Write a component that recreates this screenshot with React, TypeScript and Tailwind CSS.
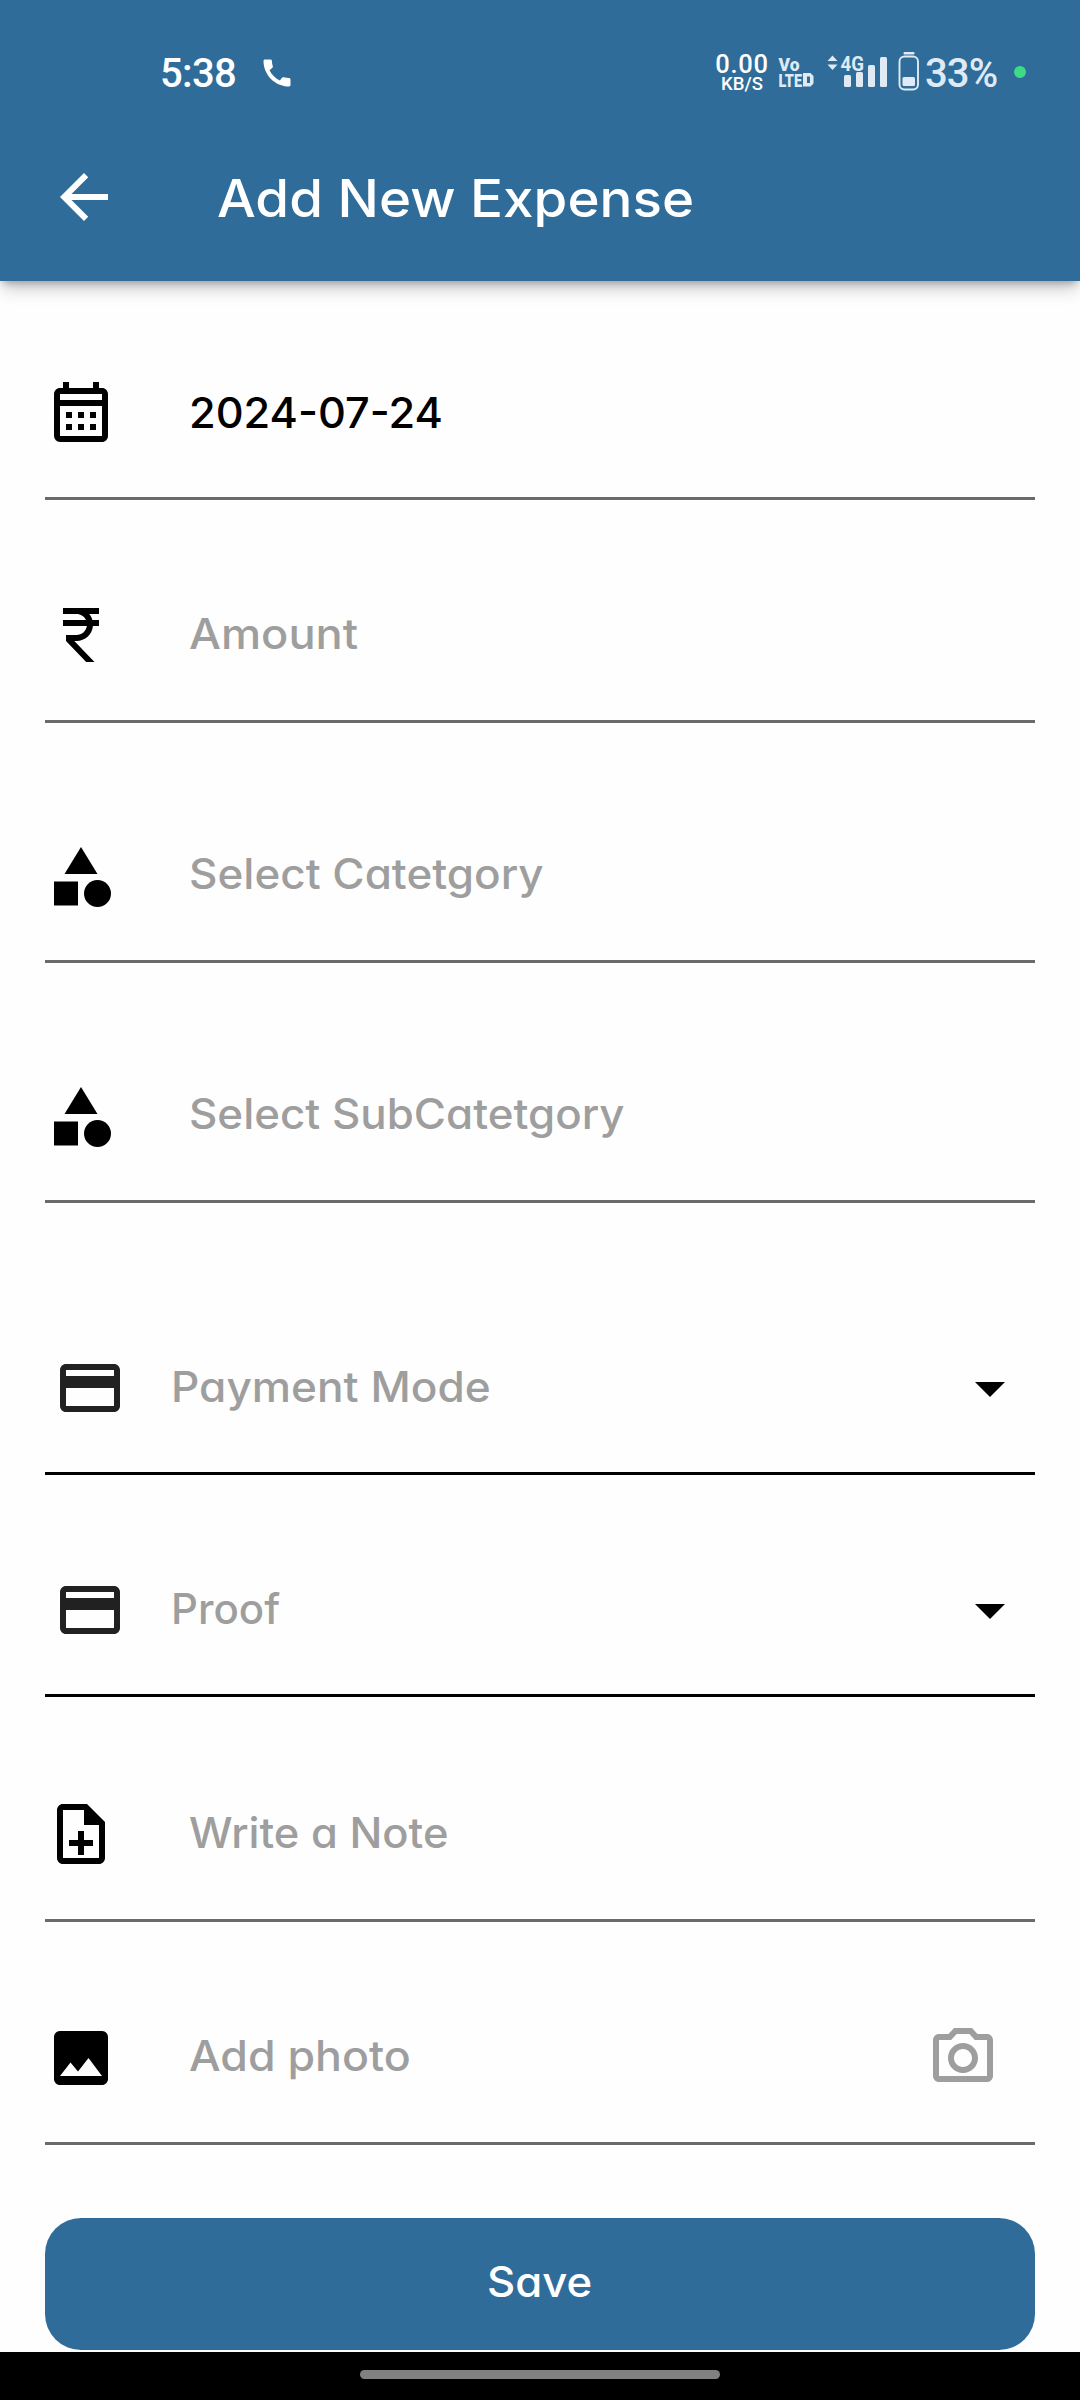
import type { ReactNode } from "react";
import {
  MdArrowBack,
  MdArrowDropDown,
  MdCall,
  MdCategory,
  MdCreditCard,
  MdCurrencyRupee,
  MdImage,
  MdOutlineCalendarMonth,
  MdOutlineCameraAlt,
  MdOutlineNoteAdd,
} from "react-icons/md";

function VolteIcon() {
  return (
    <svg width="36" height="32" viewBox="0 0 36 32" fill="currentColor" className="shrink-0 overflow-visible" fontFamily="Roboto" fontWeight="900">
      <text x="-0.500" y="14.500" fontSize="18" textLength="21" lengthAdjust="spacingAndGlyphs">Vo</text>
      <text x="-0.500" y="30.500" fontSize="19" textLength="23.500" lengthAdjust="spacingAndGlyphs">LTE</text>
      <path fillRule="evenodd" d="M24 17H31.500L34.500 20V27.500L31.500 30.500H24ZM28 20.500V27H31V20.500Z" />
    </svg>
  );
}

function SignalIcon() {
  return (
    <svg width="62" height="36" viewBox="0 0 62 36" fill="currentColor" className="shrink-0 overflow-visible" fontFamily="Roboto" fontWeight="700">
      <path d="M0.500 7L5.500 1.500L10.500 7ZM0.500 10.500L5.500 16L10.500 10.500Z" />
      <text x="13.500" y="16.500" fontSize="21" textLength="23.500" lengthAdjust="spacingAndGlyphs">4G</text>
      <rect x="17" y="21" width="7" height="12" rx="1.500" />
      <rect x="29" y="18" width="7" height="15" rx="1.500" />
      <rect x="41" y="11" width="7" height="22" rx="1.500" />
      <rect x="53" y="3" width="7" height="30" rx="1.500" />
    </svg>
  );
}

function BatteryIcon() {
  return (
    <svg width="22" height="40" viewBox="0 0 22 40" className="shrink-0" fill="currentColor">
      <rect x="5.500" y="1" width="11" height="2.400" rx="1" />
      <rect x="1.500" y="5.500" width="18.500" height="33" rx="5" fill="none" stroke="currentColor" strokeWidth="1.900" />
      <rect x="4.500" y="26" width="12.500" height="9" rx="1.500" />
    </svg>
  );
}

function StatusBar() {
  return (
    <div className="flex h-[113px] items-start pl-40 pr-[54px] font-[Roboto,sans-serif] font-medium">
      <span className="mt-[54px] w-[99px] text-[40px] leading-[40px] tracking-[-0.7px]">5:38</span>
      <MdCall className="mt-[55px] size-9" />
      <div className="ml-auto flex text-[#dfeaf4]">
        <div className="mt-[53px] flex w-[58px] flex-col items-center text-white">
          <span className="text-[25.5px] leading-[23px] tracking-[0.7px]">0.00</span>
          <span className="text-[18.5px] leading-[16px]">KB/S</span>
        </div>
        <div className="mt-[56px] ml-[8px]"><VolteIcon /></div>
        <div className="mt-[54px] ml-[12px]"><SignalIcon /></div>
        <div className="mt-[51px] ml-[9px]"><BatteryIcon /></div>
        <span className="mt-[54px] ml-[5px] w-[75px] text-[40px] leading-[40px] tracking-[-0.9px] whitespace-nowrap">33%</span>
        <span className="mt-[66px] ml-[14px] size-3 rounded-full bg-[#3ddc84]" />
      </div>
    </div>
  );
}

type FieldProps = {
  icon: ReactNode;
  label: string;
  row: string;
  text: string;
  trailing?: ReactNode;
};

function Field({ icon, label, row, text, trailing }: FieldProps) {
  return (
    <div className={`flex items-start ${row}`}>
      {icon}
      <span className={`origin-left text-[42px] leading-[72px] whitespace-nowrap ${text}`}>{label}</span>
      {trailing}
    </div>
  );
}

const icon = "size-[72px] shrink-0";

export default function App() {
  return (
    <div className="flex h-[2400px] w-[1080px] flex-col bg-[#fefefe] font-[Inter,sans-serif] font-medium text-black [font-feature-settings:'cv11']">
      <header className="h-[281px] shrink-0 bg-[#2f6c99] text-white shadow-[0_5px_7px_-3px_rgba(0,0,0,0.25),0_10px_16px_-2px_rgba(0,0,0,0.2)]">
        <StatusBar />
        <div className="flex h-[168px] items-center pl-12">
          <MdArrowBack className={icon} />
          <h1 className="ml-[97px] origin-left scale-x-[1.052] pt-[4px] text-[52px] leading-[60px]">Add New Expense</h1>
        </div>
      </header>

      <main className="flex flex-col px-[45px] text-[#9e9e9e]">
        <Field
          icon={<MdOutlineCalendarMonth className={`${icon} text-black`} />}
          label="2024-07-24"
          row="h-[219px] border-b-[3px] border-[#6a6a6a] pt-[95px]"
          text="ml-[72px] mt-px scale-x-[1.03] text-black"
        />
        <Field
          icon={<MdCurrencyRupee className={`${icon} text-black`} />}
          label="Amount"
          row="h-[223px] border-b-[3px] border-[#6a6a6a] pt-[99px]"
          text="ml-[72px] -mt-[1px] scale-x-[1.075]"
        />
        <Field
          icon={<MdCategory className={`${icon} text-black`} />}
          label="Select Catetgory"
          row="h-[240px] border-b-[3px] border-[#6a6a6a] pt-[118px]"
          text="ml-[72px] -mt-[3px] scale-x-[1.048]"
        />
        <Field
          icon={<MdCategory className={`${icon} text-black`} />}
          label="Select SubCatetgory"
          row="h-[240px] border-b-[3px] border-[#6a6a6a] pt-[118px]"
          text="ml-[72px] -mt-[3px] scale-x-[1.045]"
        />
        <Field
          icon={<MdCreditCard className={`${icon} ml-[9px] text-[#212121]`} />}
          label="Payment Mode"
          row="h-[272px] border-b-[3px] border-black pt-[149px]"
          text="ml-[45px] -mt-[1px] scale-x-[1.052]"
          trailing={<MdArrowDropDown className={`${icon} mr-[9px] ml-auto text-black`} />}
        />
        <Field
          icon={<MdCreditCard className={`${icon} ml-[9px] text-[#212121]`} />}
          label="Proof"
          row="h-[222px] border-b-[3px] border-black pt-[99px]"
          text="ml-[45px] -mt-[1px]"
          trailing={<MdArrowDropDown className={`${icon} mr-[9px] ml-auto text-black`} />}
        />
        <Field
          icon={<MdOutlineNoteAdd className={`${icon} text-black`} />}
          label="Write a Note"
          row="h-[225px] border-b-[3px] border-[#6a6a6a] pt-[101px]"
          text="ml-[72px] -mt-[1px] scale-x-[1.035]"
        />
        <Field
          icon={<MdImage className={`${icon} text-black`} />}
          label="Add photo"
          row="h-[223px] border-b-[3px] border-[#6a6a6a] pt-[100px]"
          text="ml-[72px] -mt-[2px] scale-x-[1.064]"
          trailing={<MdOutlineCameraAlt className={`${icon} mr-9 ml-auto`} />}
        />
        <button className="mt-[73px] h-[132px] rounded-[36px] bg-[#2f6c99] pb-[4px] text-[42px] leading-[60px] font-medium text-white">
          <span className="inline-block scale-x-[1.04]">Save</span>
        </button>
      </main>

      <footer className="mt-auto flex h-12 shrink-0 justify-center bg-black pt-[18px]">
        <div className="h-[9px] w-[360px] rounded-full bg-[#808080]" />
      </footer>
    </div>
  );
}
